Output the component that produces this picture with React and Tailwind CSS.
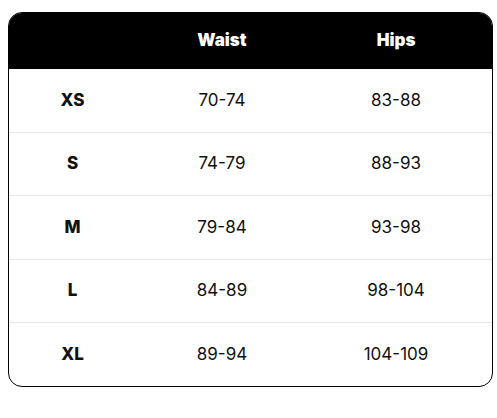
export default function App() {
  const rows = [
    ["XS", "70-74", "83-88"],
    ["S", "74-79", "88-93"],
    ["M", "79-84", "93-98"],
    ["L", "84-89", "98-104"],
    ["XL", "89-94", "104-109"],
  ];
  return (
    <div className="w-[497px] h-[418px] bg-white pt-3 pl-2" style={{ fontFamily: "Inter, 'Liberation Sans', sans-serif" }}>
      <div className="w-[485px] h-[375px] border border-black rounded-[14px] overflow-hidden flex flex-col">
        <div className="h-[56px] shrink-0 bg-black grid grid-cols-[127px_172px_176px] items-center text-white font-black text-[17px]">
          <div></div>
          <div className="text-center">Waist</div>
          <div className="text-center">Hips</div>
        </div>
        <div className="flex-1 flex flex-col">
          {rows.map((r, i) => (
            <div
              key={r[0]}
              className={`flex-1 grid grid-cols-[127px_172px_176px] items-center text-[17px] text-[#111] ${i > 0 ? "border-t border-[#e6e6e6]" : ""}`}
            >
              <div className="text-center font-extrabold">{r[0]}</div>
              <div className="text-center">{r[1]}</div>
              <div className="text-center">{r[2]}</div>
            </div>
          ))}
        </div>
      </div>
    </div>
  );
}
